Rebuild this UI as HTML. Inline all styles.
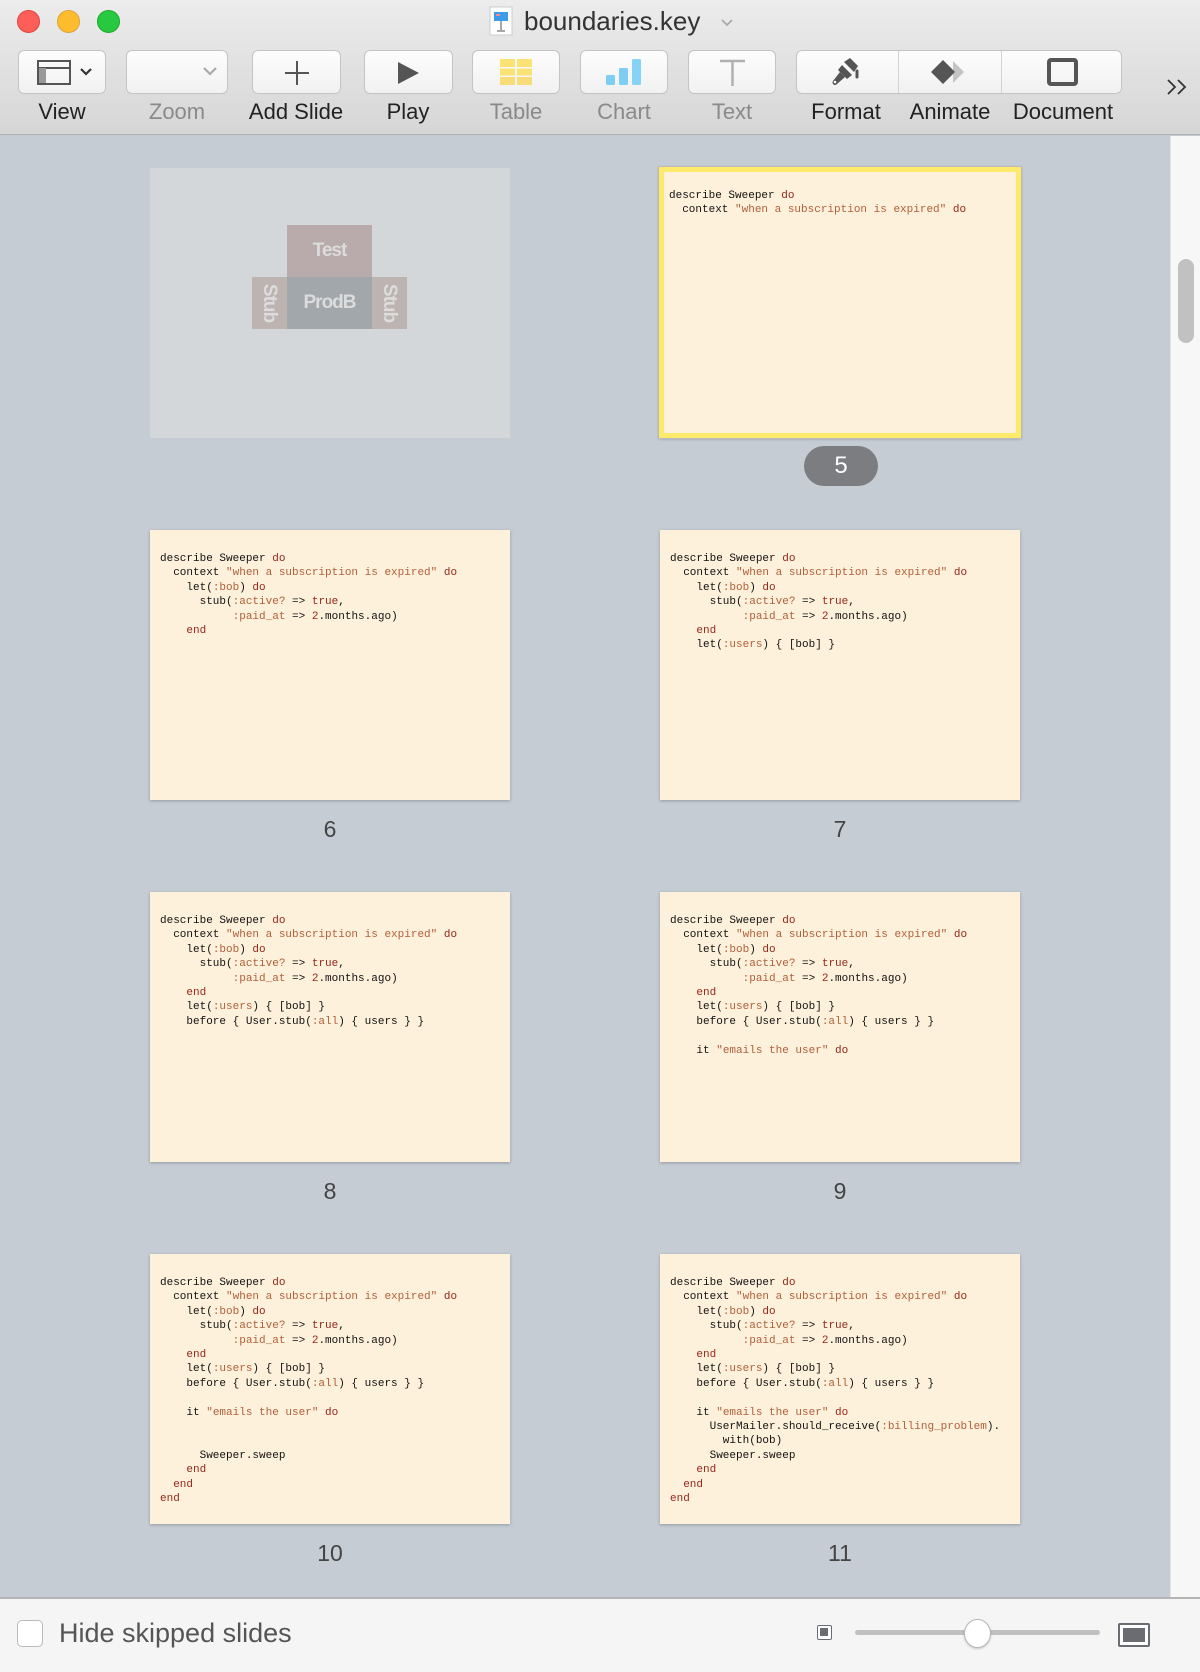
<!DOCTYPE html>
<html><head><meta charset="utf-8">
<style>
*{margin:0;padding:0;box-sizing:border-box}
body{width:1200px;height:1672px;overflow:hidden;background:#c5ccd4;font-family:"Liberation Sans",sans-serif;position:relative}
.tb{position:absolute;left:0;top:0;width:1200px;height:135px;background:linear-gradient(#ececec,#d6d6d6);border-bottom:1px solid #b0b0b0}
.tl{position:absolute;top:10px;width:23px;height:23px;border-radius:50%}
.title{position:absolute;left:524px;top:6px;font-size:26px;color:#333}
.btn{position:absolute;top:50px;height:44px;background:linear-gradient(#fdfdfd,#f1f1f1);border:1px solid #c4c4c4;border-radius:6px}
.lbl{position:absolute;top:99px;font-size:22px;color:#222;transform:translateX(-50%);white-space:nowrap}
.lbl.g{color:#8a8a8a}
.slide{position:absolute;width:360px;height:270px;background:#fef1dc;box-shadow:0 1px 3px rgba(0,0,0,.25)}
.code{position:absolute;left:10px;top:22px;font-family:"Liberation Mono",monospace;font-size:11px;line-height:14.4px;white-space:pre;color:#111}
.k{color:#95261b}.s{color:#b0603a}
.num{position:absolute;font-size:23px;color:#444;transform:translateX(-50%)}
.bb{position:absolute;left:0;top:1597px;width:1200px;height:75px;background:#f5f5f5;border-top:2px solid #b4b4b4}
</style></head><body>
<div class="tb">
<div class="tl" style="left:17px;background:#fc5f57;border:1px solid #e0443e"></div>
<div class="tl" style="left:57px;background:#fdbc2e;border:1px solid #dea236"></div>
<div class="tl" style="left:97px;background:#28c840;border:1px solid #1aab29"></div>
<svg style="position:absolute;left:489px;top:6px" width="24" height="30"><rect x="1" y="1" width="22" height="28" fill="#fff" stroke="#ccc"/><rect x="5" y="6" width="14" height="9" fill="#3d9be9"/><rect x="7" y="8" width="4" height="2" fill="#f88"/><line x1="12" y1="15" x2="12" y2="24" stroke="#888" stroke-width="1.5"/><line x1="8" y1="25" x2="16" y2="25" stroke="#888" stroke-width="1.5"/></svg>
<div class="title">boundaries.key</div>
<svg style="position:absolute;left:720px;top:18px" width="14" height="10"><path d="M2 2l5 5 5-5" stroke="#aaa" stroke-width="1.8" fill="none"/></svg>

<div class="btn" style="left:18px;width:88px"></div>
<svg style="position:absolute;left:37px;top:59px" width="60" height="28"><rect x="1" y="2" width="32" height="23" fill="none" stroke="#555" stroke-width="2"/><line x1="1" y1="9" x2="33" y2="9" stroke="#555" stroke-width="2"/><rect x="2" y="9" width="7" height="15" fill="#999"/><path d="M44 10l5 5 5-5" stroke="#333" stroke-width="2.2" fill="none"/></svg>
<div class="btn" style="left:126px;width:102px"></div>
<svg style="position:absolute;left:202px;top:66px" width="16" height="12"><path d="M2 2l6 6 6-6" stroke="#aaa" stroke-width="2.2" fill="none"/></svg>
<div class="btn" style="left:252px;width:89px"></div>
<svg style="position:absolute;left:282px;top:58px" width="30" height="30"><path d="M15 3v24M3 15h24" stroke="#555" stroke-width="2"/></svg>
<div class="btn" style="left:364px;width:89px"></div>
<svg style="position:absolute;left:396px;top:60px" width="24" height="26"><path d="M2 2l21 11-21 11z" fill="#555"/></svg>
<div class="btn" style="left:472px;width:88px"></div>
<svg style="position:absolute;left:500px;top:59px" width="33" height="27"><g fill="#fbe274"><rect x="0" y="0" width="15" height="8"/><rect x="17" y="0" width="15" height="8"/><rect x="0" y="9.5" width="15" height="7"/><rect x="17" y="9.5" width="15" height="7"/><rect x="0" y="18" width="15" height="8" fill="#f8dc7a"/><rect x="17" y="18" width="15" height="8" fill="#f8dc7a"/></g></svg>
<div class="btn" style="left:580px;width:88px"></div>
<svg style="position:absolute;left:606px;top:59px" width="36" height="28"><rect x="0" y="16" width="9" height="10" rx="1.5" fill="#7ecdf4"/><rect x="13" y="9" width="9" height="17" rx="1.5" fill="#7ecdf4"/><rect x="26" y="0" width="9" height="26" rx="1.5" fill="#86d3f6"/></svg>
<div class="btn" style="left:688px;width:88px"></div>
<svg style="position:absolute;left:719px;top:59px" width="28" height="28"><path d="M1 2h25M13.5 2v25" stroke="#b0b0b0" stroke-width="2.5"/></svg>
<div class="btn" style="left:796px;width:326px"></div>
<div style="position:absolute;left:898px;top:51px;width:1px;height:42px;background:#d3d3d3"></div>
<div style="position:absolute;left:1001px;top:51px;width:1px;height:42px;background:#d3d3d3"></div>
<svg style="position:absolute;left:830px;top:57px" width="32" height="30"><path d="M14 5l6-4 8 8-4 6z" fill="#555"/><path d="M12 8l10 10-5 4-9-9z" fill="#555"/><path d="M10 15l5 5-8 7a2.5 2.5 0 0 1-4-3z" fill="#555"/><circle cx="5" cy="25" r="1.3" fill="#fff"/><path d="M27 14v6" stroke="#555" stroke-width="3" stroke-linecap="round"/></svg>
<svg style="position:absolute;left:931px;top:58px" width="38" height="28"><path d="M22 3l11 11-11 11" fill="#c4c4c4"/><path d="M12 2l12 12-12 12L0 14z" fill="#555"/></svg>
<svg style="position:absolute;left:1047px;top:58px" width="31" height="29"><rect x="2" y="2" width="27" height="24" rx="2" fill="none" stroke="#555" stroke-width="4"/></svg>
<svg style="position:absolute;left:1166px;top:78px" width="24" height="18"><path d="M2 2l7 7-7 7M12 2l7 7-7 7" stroke="#333" stroke-width="1.8" fill="none"/></svg>

<div class="lbl" style="left:62px">View</div>
<div class="lbl g" style="left:177px">Zoom</div>
<div class="lbl" style="left:296px">Add Slide</div>
<div class="lbl" style="left:408px">Play</div>
<div class="lbl g" style="left:516px">Table</div>
<div class="lbl g" style="left:624px">Chart</div>
<div class="lbl g" style="left:732px">Text</div>
<div class="lbl" style="left:846px">Format</div>
<div class="lbl" style="left:950px">Animate</div>
<div class="lbl" style="left:1063px">Document</div>
</div>

<div style="position:absolute;left:1170px;top:136px;width:30px;height:1461px;background:#f7f7f7;border-left:1px solid #e4e4e4"></div>
<div style="position:absolute;left:1178px;top:259px;width:16px;height:84px;border-radius:8px;background:#c1c1c1"></div>

<div class="slide" style="left:150px;top:168px;background:#d3d7d9;box-shadow:none">
<div style="position:absolute;left:137px;top:57px;width:85px;height:52px;background:#b9aaac;color:#dcdcdc;font:bold 19px 'Liberation Sans',sans-serif;text-align:center;line-height:52px;letter-spacing:-1px">Test</div>
<div style="position:absolute;left:137px;top:109px;width:85px;height:52px;background:#a2a7ab;color:#dcdcdc;font:bold 19px 'Liberation Sans',sans-serif;text-align:center;line-height:52px;letter-spacing:-1px">ProdB</div>
<div style="position:absolute;left:102px;top:109px;width:35px;height:52px;background:#bdb3b1"><div style="position:absolute;left:17px;top:26px;transform:translate(-50%,-50%) rotate(90deg);color:#dcdcdc;font:bold 19px 'Liberation Sans',sans-serif;letter-spacing:-1px">Stub</div></div>
<div style="position:absolute;left:222px;top:109px;width:35px;height:52px;background:#bdb3b1"><div style="position:absolute;left:17px;top:26px;transform:translate(-50%,-50%) rotate(90deg);color:#dcdcdc;font:bold 19px 'Liberation Sans',sans-serif;letter-spacing:-1px">Stub</div></div>
</div>

<div class="slide" style="left:659px;top:167px;width:362px;height:271px;border:5px solid #fde96a;outline:1px solid #bbb"><div class="code" style="left:5px;top:17px">describe Sweeper <span class="k">do</span>
  context <span class="s">"when a subscription is expired"</span> <span class="k">do</span></div></div>
<div style="position:absolute;left:804px;top:446px;width:74px;height:40px;border-radius:20px;background:#7b7d81;color:#fff;font-size:24px;text-align:center;line-height:40px">5</div>

<div class="slide" style="left:150px;top:530px"><div class="code">describe Sweeper <span class="k">do</span>
  context <span class="s">"when a subscription is expired"</span> <span class="k">do</span>
    let(<span class="s">:bob</span>) <span class="k">do</span>
      stub(<span class="s">:active?</span> =&gt; <span class="k">true</span>,
           <span class="s">:paid_at</span> =&gt; <span class="k">2</span>.months.ago)
    <span class="k">end</span></div></div>
<div class="num" style="left:330px;top:816px">6</div>

<div class="slide" style="left:660px;top:530px"><div class="code">describe Sweeper <span class="k">do</span>
  context <span class="s">"when a subscription is expired"</span> <span class="k">do</span>
    let(<span class="s">:bob</span>) <span class="k">do</span>
      stub(<span class="s">:active?</span> =&gt; <span class="k">true</span>,
           <span class="s">:paid_at</span> =&gt; <span class="k">2</span>.months.ago)
    <span class="k">end</span>
    let(<span class="s">:users</span>) { [bob] }</div></div>
<div class="num" style="left:840px;top:816px">7</div>

<div class="slide" style="left:150px;top:892px"><div class="code">describe Sweeper <span class="k">do</span>
  context <span class="s">"when a subscription is expired"</span> <span class="k">do</span>
    let(<span class="s">:bob</span>) <span class="k">do</span>
      stub(<span class="s">:active?</span> =&gt; <span class="k">true</span>,
           <span class="s">:paid_at</span> =&gt; <span class="k">2</span>.months.ago)
    <span class="k">end</span>
    let(<span class="s">:users</span>) { [bob] }
    before { User.stub(<span class="s">:all</span>) { users } }</div></div>
<div class="num" style="left:330px;top:1178px">8</div>

<div class="slide" style="left:660px;top:892px"><div class="code">describe Sweeper <span class="k">do</span>
  context <span class="s">"when a subscription is expired"</span> <span class="k">do</span>
    let(<span class="s">:bob</span>) <span class="k">do</span>
      stub(<span class="s">:active?</span> =&gt; <span class="k">true</span>,
           <span class="s">:paid_at</span> =&gt; <span class="k">2</span>.months.ago)
    <span class="k">end</span>
    let(<span class="s">:users</span>) { [bob] }
    before { User.stub(<span class="s">:all</span>) { users } }

    it <span class="s">"emails the user"</span> <span class="k">do</span></div></div>
<div class="num" style="left:840px;top:1178px">9</div>

<div class="slide" style="left:150px;top:1254px"><div class="code">describe Sweeper <span class="k">do</span>
  context <span class="s">"when a subscription is expired"</span> <span class="k">do</span>
    let(<span class="s">:bob</span>) <span class="k">do</span>
      stub(<span class="s">:active?</span> =&gt; <span class="k">true</span>,
           <span class="s">:paid_at</span> =&gt; <span class="k">2</span>.months.ago)
    <span class="k">end</span>
    let(<span class="s">:users</span>) { [bob] }
    before { User.stub(<span class="s">:all</span>) { users } }

    it <span class="s">"emails the user"</span> <span class="k">do</span>


      Sweeper.sweep
    <span class="k">end</span>
  <span class="k">end</span>
<span class="k">end</span></div></div>
<div class="num" style="left:330px;top:1540px">10</div>

<div class="slide" style="left:660px;top:1254px"><div class="code">describe Sweeper <span class="k">do</span>
  context <span class="s">"when a subscription is expired"</span> <span class="k">do</span>
    let(<span class="s">:bob</span>) <span class="k">do</span>
      stub(<span class="s">:active?</span> =&gt; <span class="k">true</span>,
           <span class="s">:paid_at</span> =&gt; <span class="k">2</span>.months.ago)
    <span class="k">end</span>
    let(<span class="s">:users</span>) { [bob] }
    before { User.stub(<span class="s">:all</span>) { users } }

    it <span class="s">"emails the user"</span> <span class="k">do</span>
      UserMailer.should_receive(<span class="s">:billing_problem</span>).
        with(bob)
      Sweeper.sweep
    <span class="k">end</span>
  <span class="k">end</span>
<span class="k">end</span></div></div>
<div class="num" style="left:840px;top:1540px">11</div>

<div class="bb">
<div style="position:absolute;left:17px;top:21px;width:26px;height:27px;border:1px solid #bbb;border-radius:5px;background:#fff"></div>
<div style="position:absolute;left:59px;top:19px;font-size:27px;color:#555">Hide skipped slides</div>
<div style="position:absolute;left:817px;top:26px;width:15px;height:15px;border:1.5px solid #6a6c72;border-radius:2px;background:#fff"><div style="position:absolute;left:2px;top:2px;width:8px;height:8px;background:#6a6c72"></div></div>
<div style="position:absolute;left:855px;top:31px;width:245px;height:5px;border-radius:3px;background:#c0c0c0"></div>
<div style="position:absolute;left:964px;top:20px;width:27px;height:29px;border-radius:50%;background:#fff;border:1px solid #b8b8b8;box-shadow:0 1px 2px rgba(0,0,0,.2)"></div>
<div style="position:absolute;left:1118px;top:24px;width:32px;height:24px;border:2px solid #6a6c72;border-radius:2px;background:#fff"><div style="position:absolute;left:3px;top:3px;width:22px;height:14px;background:#6a6c72"></div></div>
</div>
</body></html>
